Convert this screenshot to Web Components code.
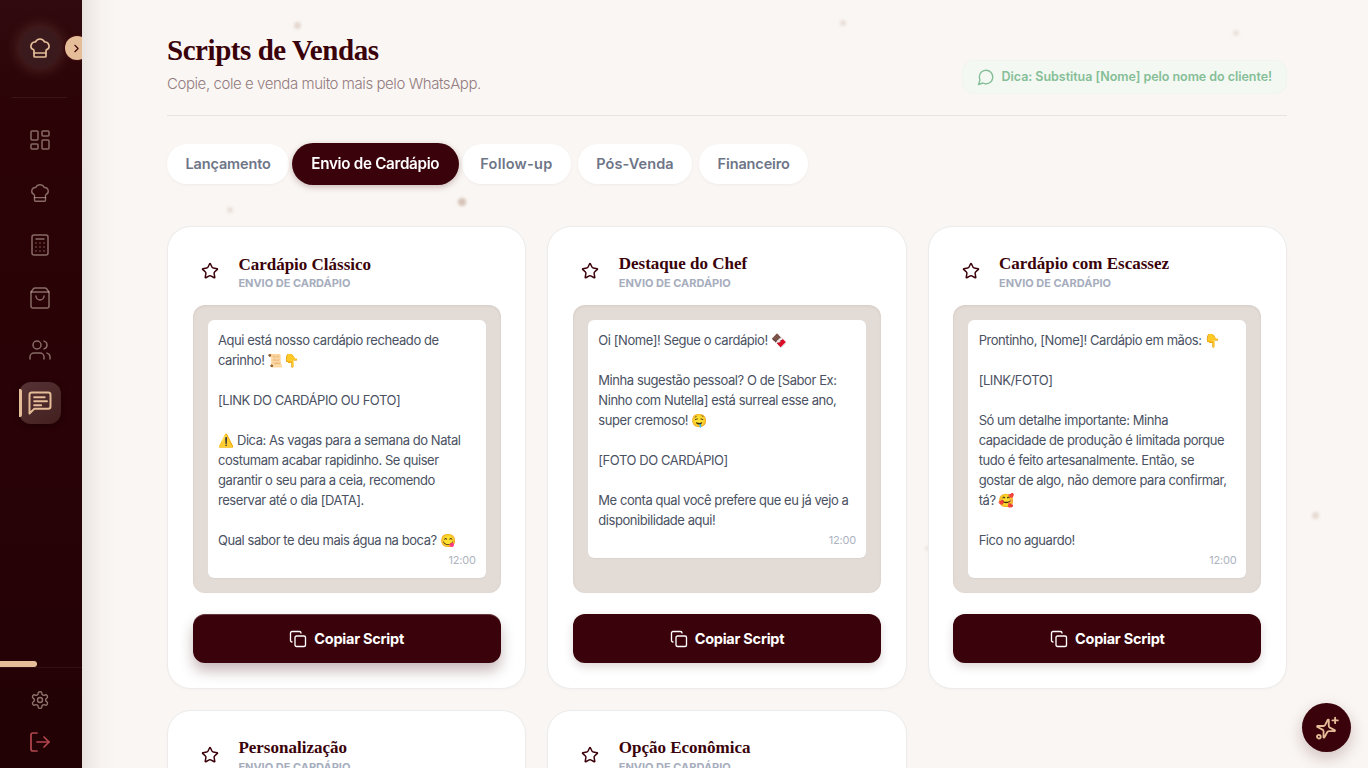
<!DOCTYPE html>
<html lang="pt-BR"><head><meta charset="utf-8"><title>Scripts de Vendas</title>
<style>
html,body{margin:0;height:100%;overflow:hidden;background:#faf6f3}
body{font-family:Inter,"Liberation Sans",sans-serif}
</style></head>
<body>
<app-shell>
  <side-bar slot="side"></side-bar>
  <page-header title-text="Scripts de Vendas" sub="Copie, cole e venda muito mais pelo WhatsApp." tip="Dica: Substitua [Nome] pelo nome do cliente!"></page-header>
  <tab-row>
    <tab-pill>Lançamento</tab-pill>
    <tab-pill active ls="-.3">Envio de Cardápio</tab-pill>
    <tab-pill ls=".25">Follow-up</tab-pill>
    <tab-pill ls=".1">Pós-Venda</tab-pill>
    <tab-pill>Financeiro</tab-pill>
  </tab-row>
  <card-grid>
    <script-card heading="Cardápio Clássico" hot>Aqui está nosso cardápio recheado de
carinho! 📜👇

[LINK DO CARDÁPIO OU FOTO]

⚠️ Dica: As vagas para a semana do Natal
costumam acabar rapidinho. Se quiser
garantir o seu para a ceia, recomendo
reservar até o dia [DATA].

Qual sabor te deu mais água na boca? 😋</script-card>
    <script-card heading="Destaque do Chef">Oi [Nome]! Segue o cardápio! 🍫

Minha sugestão pessoal? O de [Sabor Ex:
Ninho com Nutella] está surreal esse ano,
super cremoso! 🤤

[FOTO DO CARDÁPIO]

Me conta qual você prefere que eu já vejo a
disponibilidade aqui!</script-card>
    <script-card heading="Cardápio com Escassez">Prontinho, [Nome]! Cardápio em mãos: 👇

[LINK/FOTO]

Só um detalhe importante: Minha
capacidade de produção é limitada porque
tudo é feito artesanalmente. Então, se
gostar de algo, não demore para confirmar,
tá? 🥰

Fico no aguardo!</script-card>
    <script-card heading="Personalização" empty></script-card>
    <script-card heading="Opção Econômica" empty></script-card>
  </card-grid>
  <fab-button slot="over"></fab-button>
</app-shell>
<script>
const ICONS={
 hat:'<path d="M17 21a1 1 0 0 0 1-1v-5.35c0-.457.316-.844.727-1.041a4 4 0 0 0-2.134-7.589 5 5 0 0 0-9.186 0 4 4 0 0 0-2.134 7.588c.411.198.727.585.727 1.041V20a1 1 0 0 0 1 1Z"/><path d="M6 17h12"/>',
 grid:'<rect x="3" y="3" width="7" height="9" rx="1"/><rect x="14" y="3" width="7" height="5" rx="1"/><rect x="14" y="12" width="7" height="9" rx="1"/><rect x="3" y="16" width="7" height="5" rx="1"/>',
 calc:'<rect x="4" y="2" width="16" height="20" rx="2"/><path d="M8 6h8"/><path d="M8 10h.01M12 10h.01M16 10h.01M8 14h.01M12 14h.01M16 14h.01M8 18h.01M12 18h.01M16 18h.01"/>',
 bag:'<path d="M16 10a4 4 0 0 1-8 0"/><path d="M3.103 6.034h17.794"/><path d="M3.4 5.467a2 2 0 0 0-.4 1.2V20a2 2 0 0 0 2 2h14a2 2 0 0 0 2-2V6.667a2 2 0 0 0-.4-1.2l-2-2.667A2 2 0 0 0 17 2H7a2 2 0 0 0-1.6.8z"/>',
 users:'<path d="M16 21v-2a4 4 0 0 0-4-4H6a4 4 0 0 0-4 4v2"/><circle cx="9" cy="7" r="4"/><path d="M22 21v-2a4 4 0 0 0-3-3.87"/><path d="M16 3.13a4 4 0 0 1 0 7.75"/>',
 msg:'<path d="M21 15a2 2 0 0 1-2 2H7l-4 4V5a2 2 0 0 1 2-2h14a2 2 0 0 1 2 2z"/><path d="M7 7h9M7 10.500h11M7 14h6"/>',
 gear:'<path d="M12.22 2h-.44a2 2 0 0 0-2 2v.18a2 2 0 0 1-1 1.73l-.43.25a2 2 0 0 1-2 0l-.15-.08a2 2 0 0 0-2.73.73l-.22.38a2 2 0 0 0 .73 2.73l.15.1a2 2 0 0 1 1 1.72v.51a2 2 0 0 1-1 1.74l-.15.09a2 2 0 0 0-.73 2.73l.22.38a2 2 0 0 0 2.73.73l.15-.08a2 2 0 0 1 2 0l.43.25a2 2 0 0 1 1 1.73V20a2 2 0 0 0 2 2h.44a2 2 0 0 0 2-2v-.18a2 2 0 0 1 1-1.73l.43-.25a2 2 0 0 1 2 0l.15.08a2 2 0 0 0 2.73-.73l.22-.39a2 2 0 0 0-.73-2.73l-.15-.08a2 2 0 0 1-1-1.74v-.5a2 2 0 0 1 1-1.74l.15-.09a2 2 0 0 0 .73-2.73l-.22-.38a2 2 0 0 0-2.73-.73l-.15.08a2 2 0 0 1-2 0l-.43-.25a2 2 0 0 1-1-1.73V4a2 2 0 0 0-2-2z"/><circle cx="12" cy="12" r="3"/>',
 out:'<path d="M9 21H5a2 2 0 0 1-2-2V5a2 2 0 0 1 2-2h4"/><path d="m16 17 5-5-5-5"/><path d="M21 12H9"/>',
 copy:'<rect x="8" y="8" width="14" height="14" rx="2"/><path d="M4 16c-1.1 0-2-.9-2-2V4c0-1.1.9-2 2-2h10c1.1 0 2 .9 2 2"/>',
 star:'<path d="M11.525 2.295a.53.53 0 0 1 .95 0l2.31 4.679a2.123 2.123 0 0 0 1.595 1.16l5.166.756a.53.53 0 0 1 .294.904l-3.736 3.638a2.123 2.123 0 0 0-.611 1.878l.882 5.14a.53.53 0 0 1-.771.56l-4.618-2.428a2.122 2.122 0 0 0-1.973 0L6.396 21.01a.53.53 0 0 1-.77-.56l.881-5.139a2.122 2.122 0 0 0-.611-1.879L2.16 9.795a.53.53 0 0 1 .294-.906l5.165-.755a2.122 2.122 0 0 0 1.597-1.16z"/>',
 bubble:'<path d="M7.9 20A9 9 0 1 0 4 16.1L2 22Z"/>',
 chev:'<path d="m9 18 6-6-6-6"/>',
 spark:'<g transform="rotate(14 11 13)"><path d="M9.4 15.6A2 2 0 0 0 8 14.2L3 13a.5.5 0 0 1 0-1l5-1.200A2 2 0 0 0 9.400 9.400L10.600 4.500a.5.5 0 0 1 1 0L12.800 9.400A2 2 0 0 0 14.200 10.800L19 12a.5.5 0 0 1 0 1l-4.800 1.200a2 2 0 0 0-1.400 1.400L11.600 20.500a.5.5 0 0 1-1 0z"/></g><path d="M19.500 2.500v5M17 5h5"/><circle cx="4.500" cy="20" r="1.700"/>'
};
const def=(n,c)=>customElements.define(n,c);
const shell=(el,html)=>{el.attachShadow({mode:'open'}).innerHTML=html;return el.shadowRoot};

def('ui-icon',class extends HTMLElement{connectedCallback(){if(this.shadowRoot)return;
 const s=this.getAttribute('size')||20,w=this.getAttribute('w')||2;
 shell(this,`<style>:host{display:inline-flex;flex:none;line-height:0}</style><svg width="${s}" height="${s}" viewBox="0 0 24 24" fill="none" stroke="currentColor" stroke-width="${w}" stroke-linecap="round" stroke-linejoin="round">${ICONS[this.getAttribute('name')]}</svg>`)}});

def('app-shell',class extends HTMLElement{constructor(){super();shell(this,`<style>
:host{display:flex;height:100vh;width:100vw;overflow:hidden;position:relative;background:#faf6f3}
.main{flex:1;min-width:0;height:100%;overflow:hidden;box-sizing:border-box;padding:32px 81px 0 85px;position:relative;
 background:linear-gradient(90deg,rgba(60,30,30,.09),rgba(60,30,30,.02) 18px,transparent 34px) no-repeat}
.side{flex:none;width:82px;height:100%;position:relative;z-index:2}
.dots{position:absolute;inset:0;pointer-events:none}
.dots i{position:absolute;border-radius:50%;filter:blur(1.5px);background:#c9b0a2}
.content{position:relative}
</style><div class="side"><slot name="side"></slot></div>
<div class="main"><div class="dots">
<i style="left:212px;top:22px;width:7px;height:7px;opacity:.45"></i>
<i style="left:758px;top:20px;width:6px;height:6px;opacity:.35"></i>
<i style="left:1151px;top:30px;width:6px;height:6px;opacity:.3"></i>
<i style="left:145px;top:207px;width:6px;height:6px;opacity:.35"></i>
<i style="left:376px;top:198px;width:8px;height:8px;opacity:.75"></i>
<i style="left:1230px;top:512px;width:7px;height:7px;opacity:.4"></i>
<i style="left:843px;top:546px;width:5px;height:5px;opacity:.25"></i>
</div><div class="content"><slot></slot></div></div><slot name="over"></slot>`)}});

def('side-bar',class extends HTMLElement{constructor(){super();
 const item=(n,a,s)=>`<nav-icon name="${n}"${a?' active':''}${s?` size="${s}"`:''}></nav-icon>`;
 shell(this,`<style>
:host{display:flex;flex-direction:column;height:100%;width:82px;overflow:hidden;position:relative;color:#e5bd98;
 background:linear-gradient(180deg,#300a0e 0,#2b0307 120px,#280206 60%,#220205 100%)}
.top{height:97px;display:flex;align-items:center;padding-left:20px;flex:none;position:relative;box-sizing:border-box}
.logo{width:40px;height:40px;border-radius:50%;background:#3b1a1e;display:flex;align-items:center;justify-content:center;margin-top:-1px;box-shadow:0 0 14px 3px rgba(229,189,152,.17)}
.tog{position:absolute;left:65px;top:36px;width:24px;height:24px;box-sizing:border-box;border-radius:50%;background:#e5bd98;color:#3a020a;display:flex;align-items:center;justify-content:center;box-shadow:0 0 0 1.500px #3a0a0e}
.tog ui-icon{margin-left:-1px}
.rule{height:1px;background:rgba(255,255,255,.07);margin:0 15px 0 12px;flex:none}
nav{display:flex;flex-direction:column;align-items:center;padding:21px 2px 0 0;gap:10.500px;flex:1}
.prog{position:relative;height:6px;flex:none;margin-top:auto}
.prog i{position:absolute;left:0;top:0;height:6px;width:37px;background:#e5bd98;border-radius:0 3px 3px 0}
.foot{border-top:1px solid rgba(255,255,255,.06);height:101px;box-sizing:border-box;flex:none;display:flex;flex-direction:column;align-items:center;padding:22px 2px 0 0}
.g{color:rgba(229,210,195,.55);display:flex;height:20px;margin-bottom:20px}.r{color:#b3474e;display:flex;height:24px}
</style>
<div class="top"><div class="logo"><ui-icon name="hat" size="24" w="1.700"></ui-icon></div><div class="tog"><ui-icon name="chev" size="13" w="2"></ui-icon></div></div>
<div class="rule"></div>
<nav>${item('grid')}${item('hat',0,22)}${item('calc')}${item('bag')}${item('users')}${item('msg',1,28)}</nav>
<div class="prog"><i></i></div>
<div class="foot"><span class="g"><ui-icon name="gear" size="20" w="1.700"></ui-icon></span><span class="r"><ui-icon name="out" size="24" w="1.700"></ui-icon></span></div>`)}});

def('nav-icon',class extends HTMLElement{connectedCallback(){if(this.shadowRoot)return;
 const a=this.hasAttribute('active'),s=this.getAttribute('size')||24;
 shell(this,`<style>
:host{display:flex;width:42px;height:42px;align-items:center;justify-content:center;border-radius:12px;position:relative;color:${a?'#e5bd98':'rgba(229,210,195,.5)'};${a?'background:linear-gradient(135deg,#573336,#43201f);box-shadow:0 2px 6px rgba(0,0,0,.25);':''}}
.bar{position:absolute;left:0;top:7px;width:2.500px;height:28px;background:#e5bd98;border-radius:0 2px 2px 0}
</style>${a?'<i class="bar"></i>':''}<ui-icon name="${this.getAttribute('name')}" size="${s}" w="${a?1.700:1.500}"></ui-icon>`)}});

def('page-header',class extends HTMLElement{connectedCallback(){if(this.shadowRoot)return;
 shell(this,`<style>
:host{display:flex;justify-content:space-between;align-items:flex-end;height:84px;box-sizing:border-box;border-bottom:1px solid #e8e4e6;padding-bottom:21px}
h1{margin:0;font:700 29px/36px "Liberation Serif",serif;letter-spacing:-.45px;color:#3a020a;white-space:nowrap}
p{margin:6px 0 0;font:300 15px/20px Inter,sans-serif;letter-spacing:-.43px;color:#927c80;white-space:nowrap}
.tip{display:flex;align-items:center;gap:7px;height:34px;box-sizing:border-box;padding:0 14px;border-radius:12px;background:#f3f8f3;border:1px solid #eff5ef;color:#85be96;font:600 12.500px/1 Inter,sans-serif;letter-spacing:-.04px;white-space:nowrap}
</style><div><h1>${this.getAttribute('title-text')}</h1><p>${this.getAttribute('sub')}</p></div>
<div class="tip"><ui-icon name="bubble" size="18" w="1.800"></ui-icon><span>${this.getAttribute('tip')}</span></div>`)}});

def('tab-row',class extends HTMLElement{constructor(){super();shell(this,`<style>:host{display:flex;gap:7px;margin-top:28px;height:40px}</style><slot></slot>`)}});
def('tab-pill',class extends HTMLElement{connectedCallback(){if(this.shadowRoot)return;
 const a=this.hasAttribute('active'),ls=this.getAttribute('ls')||'-.12';
 shell(this,`<style>
:host{display:flex;align-items:center;height:40px;box-sizing:border-box;padding:0 18.400px;border-radius:20px;white-space:nowrap;font:600 14.500px/1 Inter,sans-serif;letter-spacing:${ls}px;
 ${a?'background:#3a020a;color:#fff;transform:scale(1.05);box-shadow:0 2px 6px rgba(58,2,10,.25);z-index:1;':'background:#fff;color:#6e7587;box-shadow:0 1px 3px rgba(90,60,60,.05);'}}
</style><slot></slot>`)}});

def('card-grid',class extends HTMLElement{constructor(){super();shell(this,`<style>:host{display:grid;grid-template-columns:repeat(3,1fr);gap:21px;margin-top:42px}</style><slot></slot>`)}});

def('script-card',class extends HTMLElement{connectedCallback(){if(this.shadowRoot)return;
 const hot=this.hasAttribute('hot'),empty=this.hasAttribute('empty');
 shell(this,`<style>
:host{display:flex;flex-direction:column;box-sizing:border-box;background:#fff;border:1px solid #ececec;border-radius:24px;padding:25px 24.600px;min-width:0;height:463px;box-shadow:0 1px 3px rgba(90,60,60,.03)}
.head{display:flex;align-items:flex-start;height:53px;padding-top:2px;box-sizing:border-box;flex:none}
.tile{width:35px;height:34px;display:flex;align-items:center;justify-content:center;color:#3a020a;margin-right:10.800px;flex:none}
.t{font:700 17px/20px "Liberation Serif",serif;color:#3a020a;white-space:nowrap;position:relative;top:${hot?'1px':'0'}}
.s{font:700 11px/14px Inter,sans-serif;letter-spacing:-.02px;color:#a6adbd;white-space:nowrap;margin-top:2px}
.chat{height:288px;box-sizing:border-box;background:#e3dbd5;border-radius:12px;padding:15px;flex:none;box-shadow:inset 0 1px 3px rgba(60,30,20,.08)}
.bub{background:#fff;border-radius:6px;padding:10px 10px 8.200px 10.400px;box-shadow:0 1px 1px rgba(0,0,0,.04)}
.msg{font:400 13px/20px Inter,"Noto Color Emoji",sans-serif;letter-spacing:-.44px;color:#4a5162;white-space:pre}
.time{font:400 11px/20px Inter,sans-serif;letter-spacing:-.2px;color:#adb3bf;text-align:right}
copy-button{margin-top:21px}
</style>
<div class="head"><div class="tile"><ui-icon name="star" size="18" w="2"></ui-icon></div><div><div class="t">${this.getAttribute('heading')}</div><div class="s">ENVIO DE CARDÁPIO</div></div></div>
<div class="chat">${empty?'':'<div class="bub"><div class="msg"><slot></slot></div><div class="time">12:00</div></div>'}</div>
<copy-button${hot?' hot':''}></copy-button>`)}});

def('copy-button',class extends HTMLElement{connectedCallback(){if(this.shadowRoot)return;
 const hot=this.hasAttribute('hot');
 shell(this,`<style>
:host{display:flex;align-items:center;justify-content:center;gap:7px;height:49px;box-sizing:border-box;padding-top:1px;flex:none;background:#3a020a;color:#fff;border-radius:12px;font:700 14.500px/1 Inter,sans-serif;letter-spacing:-.25px;
 box-shadow:${hot?'0 8px 14px rgba(58,2,10,.28),inset 0 1px 0 rgba(255,255,255,.22)':'0 4px 10px rgba(58,2,10,.16)'}}
</style><ui-icon name="copy" size="18" w="1.800"></ui-icon><span>Copiar Script</span>`)}});

def('fab-button',class extends HTMLElement{constructor(){super();shell(this,`<style>
:host{position:absolute;left:1302px;top:703px;width:49px;height:49px;border-radius:50%;background:#3a020a;color:#e5bd98;display:flex;align-items:center;justify-content:center;box-shadow:0 6px 16px rgba(58,2,10,.22);z-index:3}
</style><ui-icon name="spark" size="26" w="1.700"></ui-icon>`)}});
</script>
</body></html>
